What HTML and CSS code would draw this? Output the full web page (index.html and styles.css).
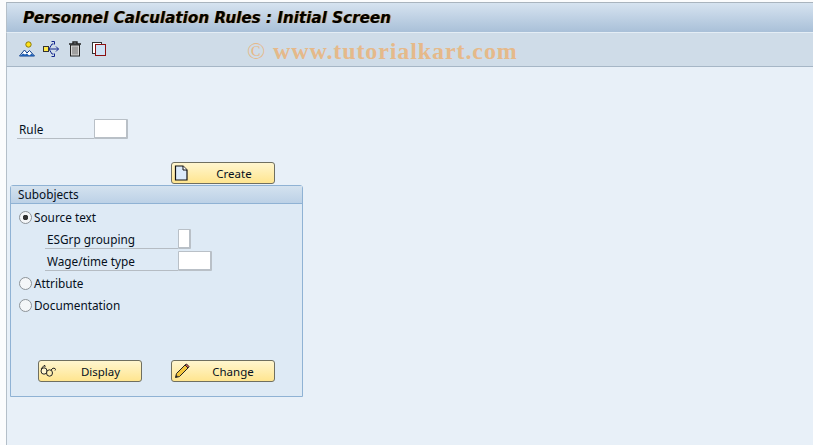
FILE: index.html
```html
<!DOCTYPE html>
<html lang="en">
<head>
  <meta charset="UTF-8">
  <meta name="viewport" content="width=device-width, initial-scale=1.0">
  <title>Personnel Calculation Rules</title>
  <link rel="stylesheet" href="styles.css">
</head>
<body>
  <div class="screen">
    <header class="title-bar">
      <h1>Personnel Calculation Rules : Initial Screen</h1>
    </header>

    <div class="toolbar">
      <svg class="tool" width="16" height="16" viewBox="0 0 16 16">
        <circle cx="9.5" cy="3.5" r="2.7" fill="#ffe21a" stroke="#8a7a10"/>
        <path d="M0.5 15 L5.5 9 L8 12 L10.5 9.5 L15.5 15 Z" fill="#fff" stroke="#0b3d8c"/>
        <path d="M1 15 L4 12.5 L6 13.5 L8 12.5 L10.5 15 Z M10 15 L12.5 12.5 L15.5 15 Z" fill="#1f5fb4"/>
      </svg>
      <svg class="tool" width="16" height="16" viewBox="0 0 16 16">
        <rect x="0.5" y="5.5" width="5" height="5" fill="#ffe84a" stroke="#333"/>
        <path d="M6 8 H15.5 M13 5.5 L15.5 8 L13 10.5 M6 8 L9 3 H10.5 M6 8 L9 13 H10.5 M8.5 0.5 H11.5 V3.5 M8.5 15.5 H11.5 V12.5" fill="none" stroke="#12248c"/>
      </svg>
      <svg class="tool" width="12" height="16" viewBox="0 0 12 16">
        <path d="M0 3 H12 M4 3 V1 H8 V3" fill="none" stroke="#222" stroke-width="1.4"/>
        <rect x="1.5" y="4" width="9" height="11" fill="#d9d9d9" stroke="#222"/>
        <path d="M4 5.5 V13.5 M6 5.5 V13.5 M8 5.5 V13.5" stroke="#666"/>
      </svg>
      <svg class="tool" width="14" height="16" viewBox="0 0 14 16">
        <rect x="0.5" y="1.5" width="9" height="11" fill="#fff" stroke="#333"/>
        <rect x="3.5" y="3.5" width="10" height="11" fill="#cfe2f5" stroke="#8c1010"/>
      </svg>
    </div>

    <div class="watermark"><span class="copy-mark">©</span> www.tutorialkart.com</div>

    <main class="content">
      <div class="field-row rule-row">
        <label class="field-label rule-label">Rule</label>
        <input class="field rule-input" type="text">
      </div>

      <button class="sap-btn create-btn">
        <svg width="15" height="16" viewBox="0 0 15 16">
          <path d="M1.5 1 H9 L13 5 V15 H1.5 Z" fill="#dcebfa" stroke="#111" stroke-width="1.2"/>
          <path d="M9 1 V5 H13" fill="#fff" stroke="#111"/>
        </svg>
        <span>Create</span>
      </button>

      <section class="group">
        <div class="group-title">Subobjects</div>
        <div class="group-body">
          <div class="radio-row"><span class="radio checked"></span>Source text</div>
          <div class="field-row sub-row">
            <label class="field-label sub-label">ESGrp grouping</label>
            <input class="field tiny-input" type="text">
          </div>
          <div class="field-row sub-row second">
            <label class="field-label sub-label">Wage/time type</label>
            <input class="field wage-input" type="text">
          </div>
          <div class="radio-row"><span class="radio"></span>Attribute</div>
          <div class="radio-row"><span class="radio"></span>Documentation</div>

          <div class="btn-row">
            <button class="sap-btn glasses-btn">
              <svg width="18" height="14" viewBox="0 0 18 14">
                <path d="M1 5 L4 1.5 Q5.5 1 5 3 M11 6 Q13 3 15 4.5 Q16 5.5 15 6.5" fill="none" stroke="#222"/>
                <ellipse cx="4" cy="7" rx="3" ry="3.2" fill="#fff6cf" stroke="#222"/>
                <ellipse cx="9.5" cy="9" rx="3" ry="3.2" fill="#ffefb0" stroke="#222"/>
              </svg>
              <span>Display</span>
            </button>
            <button class="sap-btn">
              <svg width="16" height="16" viewBox="0 0 16 16">
                <path d="M1.5 14.5 L2.5 10.5 L11 2 L14 5 L5.5 13.5 Z" fill="#f3c53c" stroke="#222"/>
                <path d="M11 2 L12.5 1 L15 3.5 L14 5 Z" fill="#d8605a" stroke="#222"/>
                <path d="M1.5 14.5 L2.5 12 L4 13.5 Z" fill="#222"/>
              </svg>
              <span>Change</span>
            </button>
          </div>
        </div>
      </section>
    </main>
  </div>
</body>
</html>
```

FILE: styles.css
```css
html, body {
  margin: 0;
  padding: 0;
  height: 100%;
}
body {
  background-color: #fbfcfd;
  font-family: "Noto Sans", "Open Sans", sans-serif;
  font-size: 11.8px;
  color: #06101c;
  overflow: hidden;
}
.screen {
  position: relative;
  margin-left: 6px;
  padding-top: 2px;
  height: 445px;
  box-sizing: border-box;
  display: flex;
  flex-direction: column;
}
.title-bar {
  height: 31px;
  box-sizing: border-box;
  border-top: 1px solid #a9b4be;
  border-left: 1px solid #b4bfc9;
  border-bottom: 1px solid #e4edf5;
  background: linear-gradient(#d6e3f0, #a9c0d8);
  padding-left: 16px;
  display: flex;
  align-items: center;
}
.title-bar h1 {
  margin: 0;
  font-family: "DejaVu Sans", sans-serif;
  font-size: 15.2px;
  font-weight: bold;
  font-style: italic;
  color: #000;
  text-shadow: 1px 0 0 #c98f3a;
}
.toolbar {
  height: 34px;
  box-sizing: border-box;
  background-color: #cfdce8;
  border-left: 1px solid #b4bfc9;
  border-bottom: 1px solid #a6b6c6;
  padding: 0 0 2px 12px;
  display: flex;
  align-items: center;
  gap: 8px;
}
.tool:nth-child(2) {
  margin-right: 2px;
}
.tool:nth-child(3) {
  margin-right: 3px;
}
.watermark {
  position: absolute;
  left: 241px;
  top: 38px;
  font-family: "Liberation Serif", serif;
  font-size: 24px;
  font-weight: bold;
  letter-spacing: 0.9px;
  color: #e5b98a;
  white-space: nowrap;
}
.copy-mark {
  font-weight: normal;
}
.content {
  flex: 1;
  background-color: #e8f0f8;
  border-left: 1px solid #b4bfc9;
  padding-top: 52px;
}
.field-row {
  display: flex;
  align-items: flex-start;
}
.field-label {
  height: 19px;
  line-height: 21px;
  box-sizing: content-box;
  border-bottom: 1px solid #b5bcc3;
  padding-left: 2px;
}
.field {
  height: 20px;
  box-sizing: border-box;
  margin: 0;
  padding: 0;
  background-color: #fff;
  border: 1px solid #b9c0c7;
  border-width: 1px 2px 2px 1px;
  border-radius: 1px;
}
.rule-row {
  margin-left: 10px;
}
.rule-label {
  width: 75px;
}
.rule-input {
  width: 34px;
}
.sap-btn {
  width: 104px;
  height: 22px;
  box-sizing: border-box;
  margin: 0;
  padding: 0 0 0 2px;
  border: 1px solid #6f6f60;
  border-radius: 3px;
  background: linear-gradient(#fff6cf, #ffe58f);
  font-family: inherit;
  font-size: 11.5px;
  color: #06101c;
  display: flex;
  align-items: center;
}
.sap-btn span {
  flex: 1;
  text-align: center;
  padding-left: 2px;
}
.create-btn {
  margin: 23px 0 0 164px;
}
.create-btn span {
  padding-left: 5px;
}
.glasses-btn {
  padding-left: 1px;
}
.group {
  margin: 1px 0 0 3px;
  width: 293px;
  height: 212px;
  box-sizing: border-box;
  border: 1px solid #8fb2d4;
  border-radius: 3px 3px 0 0;
  background-color: #deeaf5;
}
.group-title {
  height: 17px;
  line-height: 16px;
  padding-left: 7px;
  background: linear-gradient(#d4e2ef, #bcd1e6);
  border-bottom: 1px solid #8fb2d4;
}
.group-body {
  padding: 2px 0 0 8px;
}
.radio-row {
  height: 22px;
  display: flex;
  align-items: center;
}
.radio {
  width: 13px;
  height: 13px;
  box-sizing: border-box;
  margin-right: 2px;
  border: 1px solid #8d9398;
  border-radius: 50%;
  background-color: #f4f6f8;
}
.radio.checked {
  background: radial-gradient(circle, #333 0 2.5px, #f4f6f8 3px);
}
.sub-row {
  margin: 1px 0 0 26px;
}
.sub-row.second {
  margin-top: 2px;
  margin-bottom: 1px;
}
.sub-label {
  width: 131px;
}
.tiny-input {
  width: 13px;
}
.wage-input {
  width: 34px;
}
.btn-row {
  margin: 44px 0 0 19px;
  display: flex;
  gap: 29px;
}
```
